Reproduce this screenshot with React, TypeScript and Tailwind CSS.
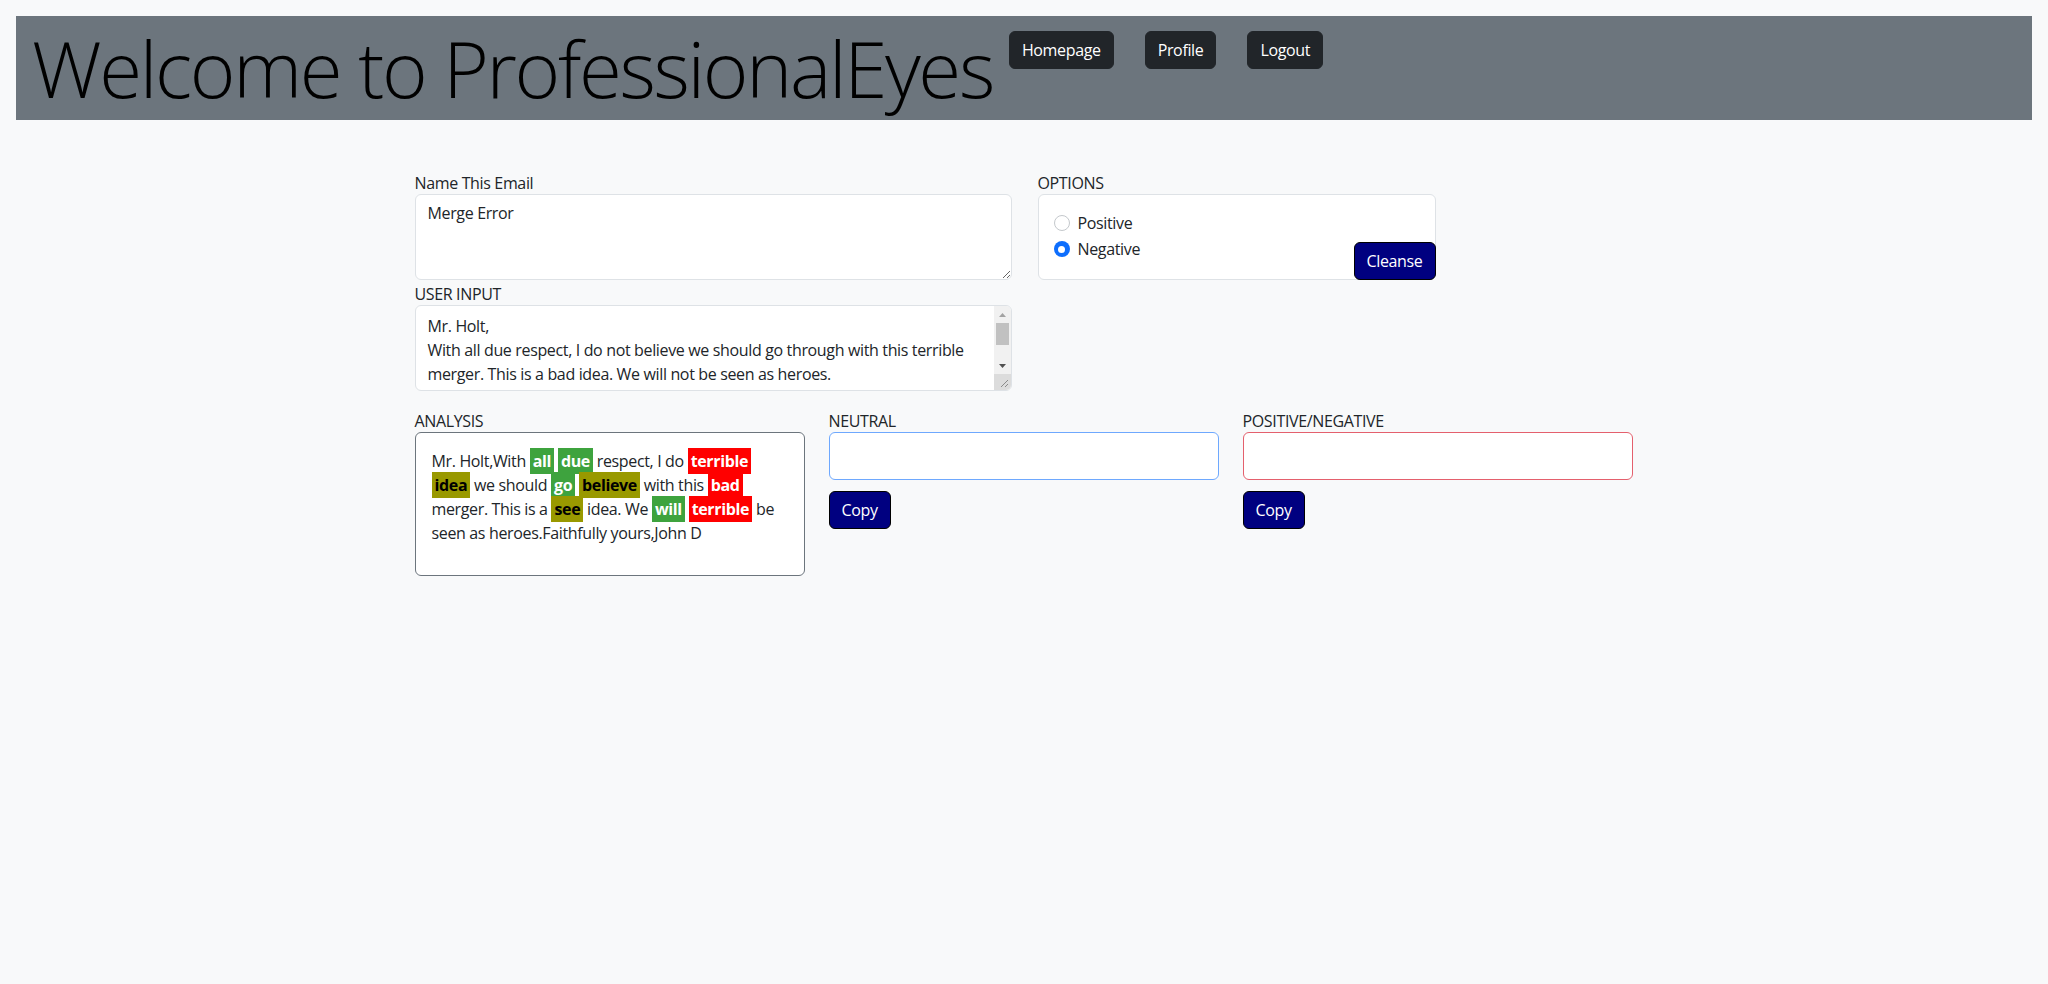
import { useState } from "react";

const navItems = ["Homepage", "Profile", "Logout"];

type Tone = "good" | "bad" | "meh";

const markTone: Record<Tone, string> = {
  good: "bg-[#3ea33e] text-white",
  bad: "bg-[#ff0000] text-white",
  meh: "bg-[#999900] text-black",
};

function Mark({ tone, children }: { tone: Tone; children: string }) {
  return <mark className={`${markTone[tone]} font-bold px-[3px] py-[2px]`}>{children}</mark>;
}

function Radio({ checked, label, onClick }: { checked: boolean; label: string; onClick: () => void }) {
  return (
    <label className="flex items-center gap-2 h-[26px] cursor-pointer" onClick={onClick}>
      {checked ? (
        <span className="w-4 h-4 rounded-full bg-[#0d6efd] flex items-center justify-center">
          <span className="w-[7px] h-[7px] rounded-full bg-white" />
        </span>
      ) : (
        <span className="w-4 h-4 rounded-full border border-[#c4c8cc] bg-white" />
      )}
      <span>{label}</span>
    </label>
  );
}

// windows-style scrollbar next to the user input box
function FakeScrollbar() {
  return (
    <div className="w-[17px] flex flex-col bg-[#f1f1f1]">
      <div className="h-[17px] flex items-center justify-center">
        <svg width="7" height="4" viewBox="0 0 7 4">
          <polygon points="0,4 3.5,0 7,4" fill="#a3a3a3" />
        </svg>
      </div>
      <div className="h-[22px] mx-[2px] bg-[#c1c1c1]" />
      <div className="flex-1" />
      <div className="h-[17px] flex items-center justify-center">
        <svg width="7" height="4" viewBox="0 0 7 4">
          <polygon points="0,0 7,0 3.5,4" fill="#505050" />
        </svg>
      </div>
      <div className="h-[16px] bg-[#dcdcdc] flex items-end justify-end p-[2px]">
        <svg width="10" height="10" viewBox="0 0 10 10">
          <path d="M9 2 L2 9 M9 6 L6 9" stroke="#8a8a8a" strokeWidth="1" />
        </svg>
      </div>
    </div>
  );
}

const emailText =
  "Mr. Holt,\nWith all due respect, I do not believe we should go through with this terrible merger. This is a bad idea. We will not be seen as heroes.\nFaithfully yours,\nJohn D";

export default function App() {
  const [mode, setMode] = useState<"positive" | "negative">("negative");
  const [name, setName] = useState("Merge Error");
  const [body, setBody] = useState(emailText);

  return (
    <div className="min-h-screen bg-[#f8f9fa] text-[#212529] text-base leading-6 tracking-[-0.35px] font-['Open_Sans',sans-serif] pt-4">
      <header className="mx-4 h-[104px] bg-[#6c757d] flex items-start pl-4">
        <h1 className="text-[78px] font-light leading-[104px] text-black tracking-[-0.03em] whitespace-nowrap">
          Welcome to ProfessionalEyes
        </h1>
        <nav className="flex gap-[31px] ml-[16px] mt-[15px]">
          {navItems.map((item) => (
            <button
              key={item}
              type="button"
              className="bg-[#212529] border border-[#212529] text-white rounded-[6px] px-3 py-[6px] leading-6"
            >
              {item}
            </button>
          ))}
        </nav>
      </header>

      <main className="w-[1219px] mx-auto mt-[51px]">
        <div className="flex gap-[26px]">
          <div className="w-[597px] flex flex-col">
            <label className="leading-6">Name This Email</label>
            <textarea
              rows={3}
              value={name}
              onChange={(e) => setName(e.target.value)}
              className="block w-full h-[86px] bg-white border border-[#dee2e6] rounded-[6px] px-3 py-[6px] leading-6 -mt-[1px]"
            />
            <label className="leading-6 mt-[2px]">USER INPUT</label>
            <div className="flex h-[86px] -mt-[1px] bg-white border border-[#dee2e6] rounded-[6px] overflow-hidden">
              <textarea
                rows={3}
                value={body}
                onChange={(e) => setBody(e.target.value)}
                className="flex-1 min-w-0 px-3 pt-[8px] pb-[6px] leading-6 resize-none overflow-hidden outline-none"
              />
              <FakeScrollbar />
            </div>
          </div>

          <div className="w-[398px] flex flex-col">
            <label className="leading-6">OPTIONS</label>
            <div className="h-[86px] -mt-[1px] bg-white border border-[#dee2e6] rounded-[6px] flex justify-between items-end">
              <div className="self-start pt-[15px] pl-[15px]">
                <Radio checked={mode === "positive"} label="Positive" onClick={() => setMode("positive")} />
                <Radio checked={mode === "negative"} label="Negative" onClick={() => setMode("negative")} />
              </div>
              <button
                type="button"
                className="bg-[#000080] border border-[#000] text-white rounded-[6px] px-3 py-[6px] leading-6 -mr-[1px] -mb-[1px]"
              >
                Cleanse
              </button>
            </div>
          </div>
        </div>

        <div className="grid grid-cols-[390px_390px_390px] gap-x-[24px] mt-[18px]">
          <div>
            <label className="block leading-6">ANALYSIS</label>
            <div className="h-[144px] bg-white border border-[#6c757d] rounded-[6px] p-4 leading-6 -mt-[1px]">
              Mr. Holt,With <Mark tone="good">all</Mark> <Mark tone="good">due</Mark> respect, I do{" "}
              <Mark tone="bad">terrible</Mark> <Mark tone="meh">idea</Mark> we should <Mark tone="good">go</Mark>{" "}
              <Mark tone="meh">believe</Mark> with this <Mark tone="bad">bad</Mark> merger. This is a{" "}
              <Mark tone="meh">see</Mark> idea. We <Mark tone="good">will</Mark> <Mark tone="bad">terrible</Mark> be
              seen as heroes.Faithfully yours,John D
            </div>
          </div>

          <div>
            <label className="block leading-6">NEUTRAL</label>
            <div className="h-[48px] bg-white border border-[#6ea8fe] rounded-[6px] -mt-[1px]" />
            <button
              type="button"
              className="mt-[11px] bg-[#000080] border border-[#000] text-white rounded-[6px] px-3 py-[6px] leading-6"
            >
              Copy
            </button>
          </div>

          <div>
            <label className="block leading-6">POSITIVE/NEGATIVE</label>
            <div className="h-[48px] bg-white border border-[#e4606d] rounded-[6px] -mt-[1px]" />
            <button
              type="button"
              className="mt-[11px] bg-[#000080] border border-[#000] text-white rounded-[6px] px-3 py-[6px] leading-6"
            >
              Copy
            </button>
          </div>
        </div>
      </main>
    </div>
  );
}
